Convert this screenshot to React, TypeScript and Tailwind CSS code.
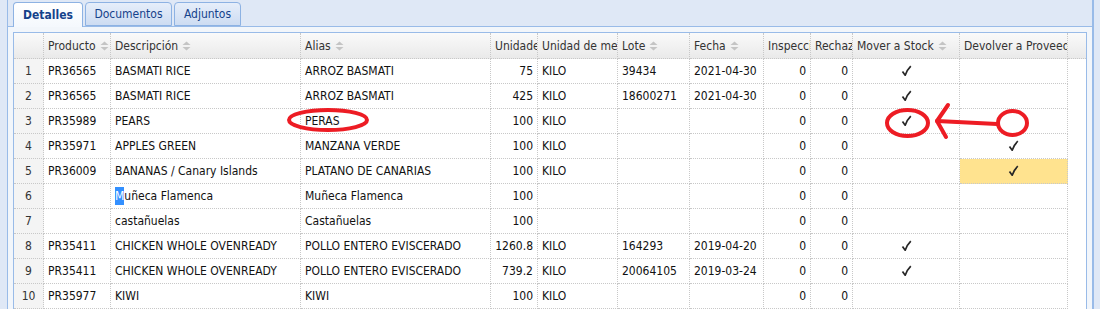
import React from 'react';

type Fila = {
  n: number;
  producto: string;
  descripcion: React.ReactNode;
  alias: string;
  unidades: string;
  unidad: string;
  lote: string;
  fecha: string;
  mover: boolean;
  devolver: boolean;
  amarillo?: boolean;
};

const filas: Fila[] = [
  { n: 1, producto: 'PR36565', descripcion: 'BASMATI RICE', alias: 'ARROZ BASMATI', unidades: '75', unidad: 'KILO', lote: '39434', fecha: '2021-04-30', mover: true, devolver: false },
  { n: 2, producto: 'PR36565', descripcion: 'BASMATI RICE', alias: 'ARROZ BASMATI', unidades: '425', unidad: 'KILO', lote: '18600271', fecha: '2021-04-30', mover: true, devolver: false },
  { n: 3, producto: 'PR35989', descripcion: 'PEARS', alias: 'PERAS', unidades: '100', unidad: 'KILO', lote: '', fecha: '', mover: true, devolver: false },
  { n: 4, producto: 'PR35971', descripcion: 'APPLES GREEN', alias: 'MANZANA VERDE', unidades: '100', unidad: 'KILO', lote: '', fecha: '', mover: false, devolver: true },
  { n: 5, producto: 'PR36009', descripcion: 'BANANAS / Canary Islands', alias: 'PLATANO DE CANARIAS', unidades: '100', unidad: 'KILO', lote: '', fecha: '', mover: false, devolver: true, amarillo: true },
  {
    n: 6,
    producto: '',
    descripcion: (
      <>
        <span className="bg-[#3390ff] text-white">M</span>uñeca Flamenca
      </>
    ),
    alias: 'Muñeca Flamenca',
    unidades: '100',
    unidad: '',
    lote: '',
    fecha: '',
    mover: false,
    devolver: false,
  },
  { n: 7, producto: '', descripcion: 'castañuelas', alias: 'Castañuelas', unidades: '100', unidad: '', lote: '', fecha: '', mover: false, devolver: false },
  { n: 8, producto: 'PR35411', descripcion: 'CHICKEN WHOLE OVENREADY', alias: 'POLLO ENTERO EVISCERADO', unidades: '1260.8', unidad: 'KILO', lote: '164293', fecha: '2019-04-20', mover: true, devolver: false },
  { n: 9, producto: 'PR35411', descripcion: 'CHICKEN WHOLE OVENREADY', alias: 'POLLO ENTERO EVISCERADO', unidades: '739.2', unidad: 'KILO', lote: '20064105', fecha: '2019-03-24', mover: true, devolver: false },
  { n: 10, producto: 'PR35977', descripcion: 'KIWI', alias: 'KIWI', unidades: '100', unidad: 'KILO', lote: '', fecha: '', mover: false, devolver: false },
];

const cols = 'grid grid-cols-[30px_67px_190px_190px_47px_80px_72px_74px_47px_42px_107px_108px_18px]';
const celda = 'h-[25px] border-r border-b border-dotted border-[#c8c8c8] px-[4px] flex items-center overflow-hidden whitespace-nowrap';

function Orden() {
  return (
    <svg width="9" height="10" viewBox="0 0 9 10" className="ml-[4px] shrink-0">
      <path d="M4.5 0.5 L8.5 4 L0.5 4 Z" fill="#c4c4c4" />
      <path d="M0.5 6 L8.5 6 L4.5 9.5 Z" fill="#c4c4c4" />
    </svg>
  );
}

function Check() {
  return (
    <svg width="11" height="12" viewBox="0 0 11 12" className="shrink-0">
      <path d="M1.5 6.5 L4.2 10.2 Q6 5 9.8 1.2" fill="none" stroke="#262626" strokeWidth="1.7" strokeLinejoin="round" />
    </svg>
  );
}

function Cabecera({ texto, orden }: { texto: string; orden?: boolean }) {
  return (
    <div className="h-[26px] border-r border-b border-dotted border-[#c8c8c8] pl-[4px] flex items-center overflow-hidden whitespace-nowrap text-[#333]">
      <span className="shrink-0">{texto}</span>
      {orden && <Orden />}
    </div>
  );
}

export default function App() {
  return (
    <div className="relative h-[309px] w-[1100px] overflow-hidden bg-[#dfe8f6] pl-[7px] pr-[6px] font-['DejaVu_Sans_Condensed','DejaVu_Sans',sans-serif] text-[12px] text-[#111]">
      <div className="h-full border-l border-r-2 border-[#99bbe8] bg-[#f2f6fb]">
        {/* pestañas */}
        <div className="h-[27px] bg-[#dfe8f6] border-b border-[#99bbe8] pl-[5px] pt-[2px] flex gap-[2px]">
          <div className="h-[25px] w-[70px] rounded-t-[4px] border border-b-0 border-[#8db2e3] bg-gradient-to-b from-white to-[#f4f8fd] flex items-center justify-center font-bold text-[#15428b]">
            Detalles
          </div>
          <div className="h-[24px] w-[87px] rounded-t-[4px] border border-[#8db2e3] bg-gradient-to-b from-[#e6eefa] to-[#cddcf2] flex items-center justify-center text-[#15428b]">
            Documentos
          </div>
          <div className="h-[24px] w-[67px] rounded-t-[4px] border border-[#8db2e3] bg-gradient-to-b from-[#e6eefa] to-[#cddcf2] flex items-center justify-center text-[#15428b]">
            Adjuntos
          </div>
        </div>

        <div className="px-[5px] pt-[5px]">
          <div className="border border-[#99bbe8] bg-white">
            <div className={`${cols} bg-gradient-to-b from-[#fafafa] to-[#e9e9e9]`}>
              <Cabecera texto="" />
              <Cabecera texto="Producto" orden />
              <Cabecera texto="Descripción" orden />
              <Cabecera texto="Alias" orden />
              <Cabecera texto="Unidades" />
              <Cabecera texto="Unidad de medida" />
              <Cabecera texto="Lote" orden />
              <Cabecera texto="Fecha" orden />
              <Cabecera texto="Inspección" />
              <Cabecera texto="Rechazo" />
              <Cabecera texto="Mover a Stock" orden />
              <Cabecera texto="Devolver a Proveedor" />
              <div className="h-[26px] border-b border-dotted border-[#c8c8c8]" />
            </div>

            {filas.map((f) => (
              <div key={f.n} className={cols}>
                <div className={`${celda} justify-center bg-[#f4f4f4] text-[#333]`}>{f.n}</div>
                <div className={celda}>{f.producto}</div>
                <div className={celda}>{f.descripcion}</div>
                <div className={celda}>{f.alias}</div>
                <div className={`${celda} justify-end`}>{f.unidades}</div>
                <div className={celda}>{f.unidad}</div>
                <div className={celda}>{f.lote}</div>
                <div className={celda}>{f.fecha}</div>
                <div className={`${celda} justify-end`}>0</div>
                <div className={`${celda} justify-end`}>0</div>
                <div className={`${celda} justify-center`}>{f.mover && <Check />}</div>
                <div className={`${celda} justify-center ${f.amarillo ? 'bg-[#ffe38f]' : ''}`}>{f.devolver && <Check />}</div>
                <div className="h-[25px]" />
              </div>
            ))}
          </div>
        </div>
      </div>

      {/* anotaciones en rojo */}
      <svg className="absolute left-0 top-0 pointer-events-none" width="1100" height="309" viewBox="0 0 1100 309">
        <g fill="none" stroke="#ed1c24" strokeWidth="4" strokeLinecap="round" strokeLinejoin="round">
          <ellipse cx="328" cy="120" rx="39" ry="10" />
          <ellipse cx="907.5" cy="123" rx="20.5" ry="13" />
          <ellipse cx="1012.5" cy="123" rx="14.5" ry="12" />
          <path d="M997 124 L937 121" />
          <path d="M948 105 L937 121 L946 137" />
        </g>
      </svg>
    </div>
  );
}
